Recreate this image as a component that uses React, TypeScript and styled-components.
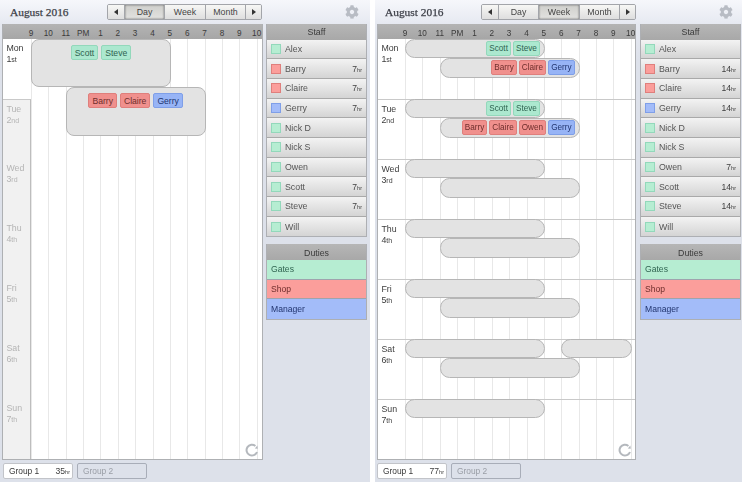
import React from "react";
import styled, { createGlobalStyle } from "styled-components";
import { FaCog } from "react-icons/fa";

const HOUR = 17.36;
const ROW = 60;
const HOURS = ["9", "10", "11", "PM", "1", "2", "3", "4", "5", "6", "7", "8", "9", "10"];
const DAYS = [
    ["Mon", "1", "st"],
    ["Tue", "2", "nd"],
    ["Wed", "3", "rd"],
    ["Thu", "4", "th"],
    ["Fri", "5", "th"],
    ["Sat", "6", "th"],
    ["Sun", "7", "th"],
];

type Duty = "gates" | "shop" | "manager";

const COLORS: Record<Duty, { bg: string; line: string; text: string; row: string }> = {
    gates: { bg: "#ace8cf", line: "#93d8bb", text: "#2f6350", row: "#b6edd2" },
    shop: { bg: "#f0908d", line: "#df7f7c", text: "#6e2e2c", row: "#fb9e9b" },
    manager: { bg: "#97b4f6", line: "#7f9fe8", text: "#22356f", row: "#a3bcf9" },
};

const GlobalStyle = createGlobalStyle`
    html, body {
        margin: 0;
        padding: 0;
        width: 742px;
        height: 482px;
        overflow: hidden;
        background-color: #ffffff;
    }
    body {
        font-family: "Liberation Sans", Arial, sans-serif;
    }
`;

const Page = styled.div`
    width: 742px;
    height: 482px;
    display: flex;
    justify-content: space-between;
    filter: blur(0.35px);
`;

const Panel = styled.div<{ $width: number; $right: number }>`
    width: ${(p) => p.$width}px;
    height: 482px;
    box-sizing: border-box;
    padding: 0 ${(p) => p.$right}px 0 2px;
    background: linear-gradient(#f6f7fb 0, #e6e9f1 24px, #dde1ea 60px);
    display: flex;
    flex-direction: column;
`;

const TopBar = styled.div`
    height: 24px;
    display: flex;
    align-items: center;
`;

const Title = styled.div<{ $width: number }>`
    width: ${(p) => p.$width}px;
    padding-left: 8px;
    box-sizing: border-box;
    font-family: "Liberation Serif", "Times New Roman", serif;
    font-size: 11.4px;
    color: #3c3f47;
    -webkit-text-stroke: 0.25px #3c3f47;
`;

const Segments = styled.div`
    display: flex;
    height: 16px;
    border: 1px solid #a3a5aa;
    border-radius: 2px;
    box-sizing: border-box;
    overflow: hidden;
`;

const Segment = styled.div<{ $active?: boolean; $width: number }>`
    width: ${(p) => p.$width}px;
    display: flex;
    align-items: center;
    justify-content: center;
    font-size: 8.8px;
    color: #444;
    border-left: 1px solid #a3a5aa;
    box-sizing: border-box;
    background: ${(p) => (p.$active ? "linear-gradient(#cfcfcc, #e2e2e0)" : "linear-gradient(#f7f7f5, #dedede)")};
    box-shadow: ${(p) => (p.$active ? "inset 0 0 2px #555" : "none")};
    &:first-child {
        border-left: none;
    }
`;

const Arrow = styled.span<{ $flip?: boolean }>`
    width: 0;
    height: 0;
    border-top: 3px solid transparent;
    border-bottom: 3px solid transparent;
    ${(p) => (p.$flip ? "border-left: 4px solid #333;" : "border-right: 4px solid #333;")}
`;

const Gear = styled.div`
    margin-left: 83px;
    display: flex;
    color: #b8bcc4;
`;

const Body = styled.div`
    display: flex;
    justify-content: space-between;
`;

const Calendar = styled.div<{ $width: number }>`
    width: ${(p) => p.$width}px;
    height: 436px;
    box-sizing: border-box;
    border: 1px solid #aeb0b3;
    border-top: none;
    background: #ffffff;
    display: flex;
    flex-direction: column;
`;

const HourBar = styled.div<{ $offset: number }>`
    height: 15px;
    flex: none;
    box-sizing: border-box;
    display: flex;
    align-items: center;
    padding: 3px 0 0 ${(p) => p.$offset - HOUR / 2}px;
    background: linear-gradient(#b4b4b4, #a6a6a6);
    overflow: hidden;
`;

const HourLabel = styled.div`
    width: ${HOUR}px;
    flex: none;
    text-align: center;
    font-size: 8.2px;
    color: #3a3a3a;
`;

const Days = styled.div`
    flex: 1;
    display: flex;
`;

const LabelColumn = styled.div<{ $width: number }>`
    width: ${(p) => p.$width}px;
    flex: none;
    display: flex;
    flex-direction: column;
`;

const DayLabel = styled.div<{ $muted?: boolean; $lined?: boolean }>`
    height: ${ROW}px;
    box-sizing: border-box;
    padding: 4px 0 0 3.4px;
    font-size: 8.8px;
    line-height: 11px;
    color: ${(p) => (p.$muted ? "#b4b4b4" : "#3c3c3c")};
    background: ${(p) => (p.$muted ? "#f1f1f1" : "#ffffff")};
    border-right: ${(p) => (p.$muted ? "1px solid #bdbdbd" : "none")};
    border-top: ${(p) => (p.$lined ? "1px solid #c9c9c9" : "none")};
    &:first-child {
        border-top: none;
    }
    small {
        font-size: 7px;
    }
`;

const Timeline = styled.div`
    flex: 1;
    min-width: 0;
    position: relative;
    display: flex;
    overflow: hidden;
`;

const HourLine = styled.div`
    width: ${HOUR}px;
    flex: none;
    box-sizing: border-box;
    border-left: 1px solid #e8e8e8;
`;

const RowLine = styled.div`
    position: absolute;
    left: 0;
    right: 0;
    height: 1px;
    background: #c9c9c9;
`;

const Shift = styled.div<{ $radius: number; $end?: boolean }>`
    position: absolute;
    box-sizing: border-box;
    background: #e3e3e3;
    border: 1px solid #b6b6b6;
    border-radius: ${(p) => p.$radius}px;
    display: flex;
    align-items: flex-start;
    gap: ${(p) => (p.$end ? 2 : 3)}px;
    justify-content: ${(p) => (p.$end ? "flex-end" : "center")};
    padding: ${(p) => (p.$end ? "1px 4px 0 0" : "5px 0 0 0")};
`;

const Chip = styled.div<{ $duty: Duty; $wide?: boolean }>`
    height: 15px;
    box-sizing: border-box;
    padding: 0 ${(p) => (p.$wide ? 3 : 2)}px;
    min-width: ${(p) => (p.$wide ? 26 : 24)}px;
    display: flex;
    align-items: center;
    justify-content: center;
    font-size: ${(p) => (p.$wide ? 8.6 : 8.2)}px;
    background: ${(p) => COLORS[p.$duty].bg};
    color: ${(p) => COLORS[p.$duty].text};
    border: 1px solid ${(p) => COLORS[p.$duty].line};
    border-radius: 2px;
`;

const Spinner = styled.svg`
    position: absolute;
    right: 3px;
    bottom: 2px;
`;

const Side = styled.div`
    width: 101px;
    flex: none;
    display: flex;
    flex-direction: column;
    gap: 7px;
`;

const Box = styled.div`
    border: 1px solid #adafb3;
    border-top: none;
`;

const BoxHeader = styled.div`
    height: 15.5px;
    box-sizing: border-box;
    padding-top: 1px;
    display: flex;
    align-items: center;
    justify-content: center;
    font-size: 8.8px;
    color: #3a3a3a;
    background: linear-gradient(#b6b6b6, #a8a8a8);
`;

const StaffRow = styled.div`
    height: 19.7px;
    box-sizing: border-box;
    display: flex;
    align-items: center;
    gap: 4px;
    padding: 0 4px;
    font-size: 8.8px;
    color: #555;
    background: linear-gradient(#f3f3f3, #d4d4d4);
    border-bottom: 1px solid #a9a9a9;
    &:last-child {
        border-bottom: none;
    }
`;

const Swatch = styled.span<{ $duty: Duty }>`
    width: 10px;
    height: 10px;
    box-sizing: border-box;
    background: ${(p) => COLORS[p.$duty].row};
    border: 1px solid ${(p) => COLORS[p.$duty].line};
`;

const Total = styled.span`
    margin-left: auto;
    font-size: 8.6px;
    color: #3f3f3f;
    small {
        font-size: 5.5px;
    }
`;

const DutyRow = styled.div<{ $duty: Duty }>`
    height: 19.8px;
    box-sizing: border-box;
    display: flex;
    align-items: center;
    padding-left: 4px;
    font-size: 8.6px;
    color: ${(p) => COLORS[p.$duty].text};
    background: ${(p) => COLORS[p.$duty].row};
    border-bottom: 1px solid #9fa3ad;
    &:last-child {
        border-bottom: none;
    }
`;

const Tabs = styled.div<{ $inset: number }>`
    display: flex;
    gap: 4px;
    padding: 3px 0 0 ${(p) => p.$inset}px;
`;

const Tab = styled.div<{ $active?: boolean }>`
    width: 70px;
    height: 16px;
    box-sizing: border-box;
    display: flex;
    align-items: center;
    justify-content: space-between;
    padding: 0 2px 0 5px;
    font-size: 8.4px;
    border: 1px solid ${(p) => (p.$active ? "#c2c4c9" : "#a8adb8")};
    border-radius: 2px;
    background: ${(p) => (p.$active ? "#ffffff" : "#dde1ea")};
    color: ${(p) => (p.$active ? "#3a3a3a" : "#9a9ea6")};
`;

interface ShiftData {
    row: number;
    start: number;
    hours: number;
    top: number;
    height: number;
    people?: [string, Duty][];
}

interface Staff {
    name: string;
    duty: Duty;
    hours?: number;
}

interface ViewProps {
    panelWidth: number;
    panelRight: number;
    titleWidth: number;
    tabInset: number;
    calendarWidth: number;
    labelWidth: number;
    active: "Day" | "Week";
    activeDay?: number;
    shifts: ShiftData[];
    staff: Staff[];
    total: number;
    radius: number;
    end?: boolean;
}

function View({ panelWidth, panelRight, titleWidth, tabInset, calendarWidth, labelWidth, active, activeDay, shifts, staff, total, radius, end }: ViewProps) {
    const isWeek = active === "Week";

    return <Panel $width={panelWidth} $right={panelRight}>
        <TopBar>
            <Title $width={titleWidth}>August 2016</Title>
            <Segments>
                <Segment $width={16}><Arrow /></Segment>
                <Segment $width={40} $active={active === "Day"}>Day</Segment>
                <Segment $width={41} $active={isWeek}>Week</Segment>
                <Segment $width={40}>Month</Segment>
                <Segment $width={16}><Arrow $flip /></Segment>
            </Segments>
            <Gear><FaCog size={14} /></Gear>
        </TopBar>

        <Body>
            <Calendar $width={calendarWidth}>
                <HourBar $offset={labelWidth}>
                    {HOURS.map((h, i) => <HourLabel key={i}>{h}</HourLabel>)}
                </HourBar>
                <Days>
                    <LabelColumn $width={labelWidth}>
                        {DAYS.map(([name, num, suffix], i) => (
                            <DayLabel key={name} $muted={!isWeek && i !== activeDay} $lined={isWeek || i === 1}>
                                {name}<br />{num}<small>{suffix}</small>
                            </DayLabel>
                        ))}
                    </LabelColumn>
                    <Timeline>
                        {HOURS.map((_, i) => <HourLine key={i} />)}
                        {isWeek && DAYS.slice(1).map((d, i) => <RowLine key={d[0]} style={{ top: (i + 1) * ROW }} />)}
                        {shifts.map((s, i) => (
                            <Shift
                                key={i}
                                $radius={radius}
                                $end={end}
                                style={{
                                    left: s.start * HOUR,
                                    width: s.hours * HOUR + 1,
                                    top: s.row * ROW + s.top,
                                    height: s.height,
                                }}
                            >
                                {s.people?.map(([name, duty]) => <Chip key={name} $duty={duty} $wide={!end}>{name}</Chip>)}
                            </Shift>
                        ))}
                        <Spinner width="14" height="14" viewBox="0 0 14 14" fill="none">
                            <path d="M12 9A5.4 5.4 0 1 1 10.4 2.9" stroke="#b4b8bd" strokeWidth="2" />
                            <path d="M9.8 5.6 12.8 5.8 12.4 2.4Z" fill="#b4b8bd" />
                        </Spinner>
                    </Timeline>
                </Days>
            </Calendar>

            <Side>
                <Box>
                    <BoxHeader>Staff</BoxHeader>
                    {staff.map((s) => (
                        <StaffRow key={s.name}>
                            <Swatch $duty={s.duty} />
                            {s.name}
                            {s.hours ? <Total>{s.hours}<small>hr</small></Total> : null}
                        </StaffRow>
                    ))}
                </Box>
                <Box>
                    <BoxHeader>Duties</BoxHeader>
                    <DutyRow $duty="gates">Gates</DutyRow>
                    <DutyRow $duty="shop">Shop</DutyRow>
                    <DutyRow $duty="manager">Manager</DutyRow>
                </Box>
            </Side>
        </Body>

        <Tabs $inset={tabInset}>
            <Tab $active>Group 1<Total>{total}<small>hr</small></Total></Tab>
            <Tab>Group 2</Tab>
        </Tabs>
    </Panel>;
}

const dayShifts: ShiftData[] = [
    { row: 0, start: 0, hours: 8, top: 0, height: 48, people: [["Scott", "gates"], ["Steve", "gates"]] },
    { row: 0, start: 2, hours: 8, top: 48, height: 49, people: [["Barry", "shop"], ["Claire", "shop"], ["Gerry", "manager"]] },
];

const weekShifts: ShiftData[] = [
    { row: 0, start: 0, hours: 8, top: 0, height: 19, people: [["Scott", "gates"], ["Steve", "gates"]] },
    { row: 0, start: 2, hours: 8, top: 19, height: 20, people: [["Barry", "shop"], ["Claire", "shop"], ["Gerry", "manager"]] },
    { row: 1, start: 0, hours: 8, top: 0, height: 19, people: [["Scott", "gates"], ["Steve", "gates"]] },
    { row: 1, start: 2, hours: 8, top: 19, height: 20, people: [["Barry", "shop"], ["Claire", "shop"], ["Owen", "shop"], ["Gerry", "manager"]] },
    { row: 2, start: 0, hours: 8, top: 0, height: 19 },
    { row: 2, start: 2, hours: 8, top: 19, height: 20 },
    { row: 3, start: 0, hours: 8, top: 0, height: 19 },
    { row: 3, start: 2, hours: 8, top: 19, height: 20 },
    { row: 4, start: 0, hours: 8, top: 0, height: 19 },
    { row: 4, start: 2, hours: 8, top: 19, height: 20 },
    { row: 5, start: 0, hours: 8, top: 0, height: 19 },
    { row: 5, start: 9, hours: 4, top: 0, height: 19 },
    { row: 5, start: 2, hours: 8, top: 19, height: 20 },
    { row: 6, start: 0, hours: 8, top: 0, height: 19 },
];

const dayStaff: Staff[] = [
    { name: "Alex", duty: "gates" },
    { name: "Barry", duty: "shop", hours: 7 },
    { name: "Claire", duty: "shop", hours: 7 },
    { name: "Gerry", duty: "manager", hours: 7 },
    { name: "Nick D", duty: "gates" },
    { name: "Nick S", duty: "gates" },
    { name: "Owen", duty: "gates" },
    { name: "Scott", duty: "gates", hours: 7 },
    { name: "Steve", duty: "gates", hours: 7 },
    { name: "Will", duty: "gates" },
];

const weekStaff: Staff[] = [
    { name: "Alex", duty: "gates" },
    { name: "Barry", duty: "shop", hours: 14 },
    { name: "Claire", duty: "shop", hours: 14 },
    { name: "Gerry", duty: "manager", hours: 14 },
    { name: "Nick D", duty: "gates" },
    { name: "Nick S", duty: "gates" },
    { name: "Owen", duty: "gates", hours: 7 },
    { name: "Scott", duty: "gates", hours: 14 },
    { name: "Steve", duty: "gates", hours: 14 },
    { name: "Will", duty: "gates" },
];

function App() {
    return <Page>
        <GlobalStyle />
        <View
            panelWidth={370}
            panelRight={3}
            titleWidth={105}
            tabInset={1}
            calendarWidth={261}
            labelWidth={28}
            active="Day"
            activeDay={0}
            shifts={dayShifts}
            staff={dayStaff}
            total={35}
            radius={8}
        />
        <View
            panelWidth={367}
            panelRight={1}
            titleWidth={104}
            tabInset={0}
            calendarWidth={259}
            labelWidth={27}
            active="Week"
            shifts={weekShifts}
            staff={weekStaff}
            total={77}
            radius={9.5}
            end
        />
    </Page>;
}

export default App;
